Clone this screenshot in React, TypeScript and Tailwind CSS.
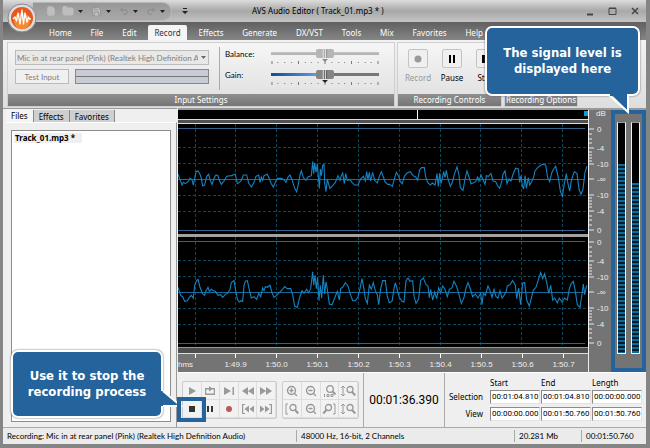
import React from "react";
import { File, Folder, Redo2, Save, Undo2, ZoomIn, ZoomOut } from "lucide-react";

const menu = ["Home", "File", "Edit", "Record", "Effects", "Generate", "DX/VST", "Tools", "Mix", "Favorites", "Help"];
const times = ["", "1:49.9", "1:50.0", "1:50.1", "1:50.2", "1:50.3", "1:50.4", "1:50.5", "1:50.6", "1:50.7"];
const gridX = [52, 172, 295, 418, 541, 664, 787, 908, 1030, 1153];

// x,offset from the zero line, three units to a pixel
const leftChannel =
  "0,-15 6,2 12,18 16,10 22,14 30,8 36,-2 42,2 46,18 50,-2 54,-22 60,-24 66,-14 70,-2 74,20 80,18 86,-8 92,-14 96,2 102,16 108,-2 114,-12 120,-10 124,4 130,16 138,6 146,-8 160,-10 172,-14 178,14 184,10 190,4 196,-12 206,-12 212,12 220,24 228,10 234,-8 242,-12 246,10 250,-6 254,4 258,-10 268,-14 274,0 280,14 286,24 292,10 298,-2 310,-2 318,2 324,10 330,-6 336,-12 342,2 350,28 356,38 362,10 366,-12 370,-24 376,-4 384,4 390,-6 400,-10 404,-52 407,-16 410,-48 414,-20 418,-46 421,-8 424,28 427,-30 430,-10 434,-40 438,-44 440,12 444,38 448,0 452,16 456,28 464,20 472,10 480,-10 486,4 490,-10 494,-18 499,14 503,-16 508,4 516,2 522,10 530,18 540,18 548,0 556,-8 562,6 566,-22 570,2 574,-20 578,6 584,-20 590,4 598,12 604,-8 610,-22 616,-6 621,8 629,16 635,16 643,22 649,0 655,-20 663,-6 667,8 673,14 679,-8 687,-18 697,-22 705,-10 713,-6 719,4 725,-28 731,-34 739,-34 743,-6 749,10 757,18 763,12 771,18 777,-16 781,22 785,-18 789,14 793,-2 797,-22 801,-4 805,-26 809,-4 817,22 823,10 829,-14 837,-36 843,-12 847,26 855,34 861,0 867,-24 873,-6 879,14 885,12 893,8 899,-6 903,6 909,-12 915,2 921,16 925,-10 931,-8 939,-16 945,6 953,8 959,20 965,28 971,8 975,-14 981,-24 987,14 993,0 999,6 1005,-14 1013,-32 1021,-30 1025,10 1029,-10 1033,20 1037,30 1041,-10 1045,28 1051,-4 1055,18 1061,8 1067,-6 1071,-24 1079,-34 1087,-40 1095,-44 1103,-42 1109,-4 1115,8 1121,-18 1127,-30 1133,-38 1141,-4 1147,36 1153,52 1159,14 1165,-16 1169,10 1175,36 1181,0 1189,-22 1197,-16 1203,30 1209,46 1215,30 1221,-20 1227,-38";
const rightChannel =
  "0,-14 4,-2 8,10 14,14 20,28 28,26 34,16 40,10 46,18 50,-20 56,-34 60,-38 66,-14 74,6 80,10 84,-4 90,-14 94,-2 100,-8 106,-4 112,-2 120,10 128,8 134,16 142,8 150,2 156,-8 160,-28 168,-34 172,-10 178,22 184,30 190,26 194,28 198,-18 202,-32 208,-34 214,-6 220,18 228,14 236,22 242,4 248,14 254,-12 258,-4 262,-16 268,-14 276,-20 282,2 288,16 296,10 304,2 312,-6 320,-16 328,-10 338,-10 344,8 350,42 358,46 364,20 372,-4 378,4 386,-8 392,2 398,-10 404,-60 407,-20 411,-50 415,-10 419,-44 423,26 427,-20 431,18 436,-50 440,6 444,-30 448,-8 454,36 462,38 470,18 478,-2 484,24 488,-10 494,-14 502,-28 510,-18 516,4 524,26 532,26 540,14 546,-10 552,-40 558,-8 562,20 568,34 574,-20 580,-8 586,-28 592,-4 598,8 602,38 608,-10 614,-34 622,-34 628,14 634,32 642,28 648,-10 652,-28 658,-6 664,16 672,28 678,30 684,-34 690,-42 696,-32 704,-34 708,12 714,34 722,20 728,-34 736,-42 744,-22 750,-18 754,18 758,-8 764,24 770,0 776,20 782,-12 788,2 794,-18 800,-10 808,14 814,-8 822,-12 828,-32 836,-16 842,4 850,34 858,16 864,-12 870,-28 878,-6 884,14 892,6 900,18 908,4 912,38 916,4 922,10 930,-18 936,-4 942,16 948,-8 954,14 960,18 966,-4 972,18 978,10 984,0 988,-18 996,-22 1004,-34 1012,-20 1016,20 1022,-12 1028,38 1034,-26 1040,-28 1046,24 1054,42 1060,18 1066,-6 1074,-14 1082,-40 1088,-58 1094,-40 1100,-54 1106,-28 1112,4 1118,-20 1124,24 1130,18 1138,32 1144,18 1152,30 1160,18 1168,24 1174,-10 1180,-26 1186,-32 1192,-2 1198,38 1206,46 1212,6 1216,-24 1220,8 1226,-20";

const shift = (data: string) =>
  data
    .split(" ")
    .map((p) => p.split(",").map(Number))
    .map(([x, y]) => `${x},${y + 164}`)
    .join(" ");

const Channel = ({ data }: { data: string }) => (
  <svg viewBox="0 0 1230 328" preserveAspectRatio="none" className="block h-full w-full" fill="none">
    <g stroke="#0b465c" strokeDasharray="3 2" shapeRendering="crispEdges">
      {gridX.map((x) => (
        <path key={x} d={`M${x} 0V328`} vectorEffect="non-scaling-stroke" />
      ))}
      {[71, 118, 212, 260].map((y) => (
        <path key={y} d={`M0 ${y}H1230`} vectorEffect="non-scaling-stroke" />
      ))}
    </g>
    <g stroke="#35608a" shapeRendering="crispEdges">
      <path d="M0 14H1222M0 317H1222" vectorEffect="non-scaling-stroke" />
      <path d="M0 164H1222" stroke="#176a98" vectorEffect="non-scaling-stroke" />
    </g>
    <polyline points={shift(data)} stroke="#1483c4" strokeWidth="1.1" vectorEffect="non-scaling-stroke" />
  </svg>
);

const scale = [
  [5, "0"],
  [24, "-4"],
  [40, "-10"],
  [55, "-∞"],
  [71, "-10"],
  [87, "-4"],
  [106, "0"],
] as const;

const DbScale = () => (
  <svg viewBox="0 0 22 110" preserveAspectRatio="xMinYMid meet" className="block h-full w-full">
    <path
      d="M0 5h5M0 24h5M0 40h5M0 55h5M0 71h5M0 87h5M0 106h5M0 10h3M0 15h3M0 19h3M0 28h3M0 31h3M0 34h3M0 37h3M0 74h3M0 77h3M0 80h3M0 83h3M0 92h3M0 96h3M0 101h3"
      stroke="#e8e8e8"
    />
    {scale.map(([y, label]) => (
      <text key={y} x="8" y={y + 3} fontSize="8" fill="#eeeeee">
        {label}
      </text>
    ))}
  </svg>
);

const Slider = ({ label, active }: { label: string; active?: boolean }) => (
  <div className="flex h-[21px] items-start">
    <label htmlFor={label} className="w-[46px] shrink-0">
      {label}:
    </label>
    <div className="h-[16px] flex-1">
      <input
        id={label}
        type="range"
        defaultValue={50}
        className={
          "block h-[11px] w-full appearance-none bg-[length:100%_3px] bg-center bg-no-repeat [&::-webkit-slider-thumb]:h-[9px] [&::-webkit-slider-thumb]:w-[18px] [&::-webkit-slider-thumb]:appearance-none [&::-webkit-slider-thumb]:rounded-[2px] " +
          (active
            ? "bg-[linear-gradient(90deg,#134a94,#5b9be0_42%,#777_50%,#777)] [&::-webkit-slider-thumb]:bg-[linear-gradient(90deg,#858585_35%,#eee_40%,#555_46%,#ddd_52%,#666_58%,#858585_65%)]"
            : "bg-[linear-gradient(#c4c4c4,#aeaeae)] [&::-webkit-slider-thumb]:bg-[linear-gradient(90deg,#b5b5b5_35%,#eee_40%,#999_46%,#eee_52%,#999_58%,#b5b5b5_65%)]")
        }
      />
      <svg viewBox="0 0 110 5" preserveAspectRatio="none" className="block h-[5px] w-full">
        <path
          d="M1 2v3M7 3v1M14 3v1M21 3v1M28 2v3M35 3v1M41 3v1M48 3v1M55 1v4M62 3v1M69 3v1M75 3v1M82 2v3M89 3v1M96 3v1M102 3v1M109 2v3"
          stroke="#777"
        />
        <path d="M52 0h6l-3 3z" fill={active ? "#222" : "#888"} />
      </svg>
    </div>
  </div>
);

const Group = ({ title, className, children }: { title: string; className: string; children?: React.ReactNode }) => (
  <section className={"flex flex-col border border-[#cfcfcf] bg-linear-to-b from-[#f6f6f6] to-[#dedede] " + className}>
    <div className="flex min-h-0 flex-1">{children}</div>
    <h2 className="h-[12px] shrink-0 bg-linear-to-b from-[#8f8f8f] to-[#757575] text-center leading-[11px] whitespace-nowrap text-white">
      {title}
    </h2>
  </section>
);

const RecordButton = ({ label, disabled, children }: { label: string; disabled?: boolean; children: React.ReactNode }) => (
  <button disabled={disabled} className="flex w-[34px] flex-col items-center gap-1 text-black disabled:text-[#999]">
    <span className="grid h-[19px] w-[20px] place-items-center rounded-[2px] border border-[#c4c4c4] bg-[#f0f0f0]">
      <svg viewBox="0 0 10 10" className="size-[10px]" fill="currentColor">
        {children}
      </svg>
    </span>
    <span className="leading-[12px]">{label}</span>
  </button>
);

const Caret = () => (
  <svg viewBox="0 0 5 3" className="h-[3px] w-[5px] shrink-0" fill="#222">
    <path d="M0 0h5L2.500 3z" />
  </svg>
);

const Shape = ({ d, red, dark }: { d: string; red?: boolean; dark?: boolean }) => (
  <svg
    viewBox="0 0 14 12"
    className={"h-[12px] w-[14px] shrink-0 " + (red ? "text-[#b85a5a]" : dark ? "text-[#333]" : "text-[#999]")}
    fill="currentColor"
  >
    <path d={d} fillRule="evenodd" />
  </svg>
);

const transport = [
  { name: "Play", icon: <Shape d="M4 2l7 4-7 4z" /> },
  { name: "Loop", icon: <Shape d="M2 3h4V1l3 2h3v7H2zM3.200 4.500v4h7.600v-4H9L6 6.500v-2z" /> },
  { name: "Play to end", icon: <Shape d="M2 2l7 4-7 4zM10.500 2H12v8h-1.500z" /> },
  { name: "Rewind", icon: <Shape d="M7 2v8L1 6zM13 2v8L7 6z" /> },
  { name: "Forward", icon: <Shape d="M1 2l6 4-6 4zM7 2l6 4-6 4z" /> },
  { name: "Stop", icon: <Shape dark d="M4 3h6v6H4z" /> },
  { name: "Pause", icon: <Shape dark d="M4 3h2v6H4zM8 3h2v6H8z" /> },
  { name: "Record", icon: <Shape red d="M4 6a3 3 0 1 0 6 0a3 3 0 1 0-6 0z" /> },
  { name: "To start", icon: <Shape d="M1 1h3v1H2.200v8H4v1H1zM8 2.500v7L3.500 6zM13 2.500v7L8.500 6z" /> },
  { name: "To end", icon: <Shape d="M13 1h-3v1h1.800v8H10v1h3zM1 2.500v7L5.500 6zM6 2.500v7L10.500 6z" /> },
];

const glass = "size-[12px] shrink-0";

const VerticalZoom = () => (
  <svg viewBox="0 0 16 12" className="h-[12px] w-[16px] shrink-0" fill="none" stroke="currentColor">
    <path d="M3 1v10M1 3l2-2 2 2M1 9l2 2 2-2" />
    <circle cx="10" cy="4.500" r="3" strokeWidth="1.300" />
    <path d="M12.200 7l3 3.500" strokeWidth="2" />
  </svg>
);

const zooms = [
  { name: "Zoom in", icon: <ZoomIn className={glass} strokeWidth={2.8} /> },
  { name: "Zoom out", icon: <ZoomOut className={glass} strokeWidth={2.8} /> },
  {
    name: "Zoom full",
    icon: (
      <svg viewBox="0 0 14 14" className="size-[14px]" fill="none" stroke="currentColor">
        <circle cx="8" cy="5" r="3.300" strokeWidth="1.300" />
        <path d="M10.500 7.500l3 3" strokeWidth="2" />
        <path d="M2.500 10v3M5 10.500h2v2H5zM9 10.500h2v2H9z" />
      </svg>
    ),
  },
  { name: "Zoom in vertically", icon: <VerticalZoom /> },
  {
    name: "Zoom to left",
    icon: (
      <svg viewBox="0 0 16 12" className="h-[12px] w-[16px]" fill="none" stroke="currentColor">
        <path d="M4 1H2v10h2" />
        <circle cx="9" cy="4.500" r="3" strokeWidth="1.300" />
        <path d="M11.200 7l3 3.500" strokeWidth="2" />
      </svg>
    ),
  },
  { name: "Zoom to selection", icon: <ZoomOut className={glass} strokeWidth={2.8} /> },
  {
    name: "Zoom to right",
    icon: (
      <svg viewBox="0 0 16 12" className="h-[12px] w-[16px]" fill="none" stroke="currentColor">
        <path d="M12 1h2v10h-2" />
        <circle cx="7.500" cy="4.500" r="3" strokeWidth="1.300" />
        <path d="M5.300 7l-3 3.500" strokeWidth="2" />
      </svg>
    ),
  },
  { name: "Zoom out vertically", icon: <VerticalZoom /> },
];

const Field = ({ name, value }: { name: string; value: string }) => (
  <input
    aria-label={name}
    defaultValue={value}
    className="block h-[14px] w-full min-w-0 border border-[#e2e2e2] border-t-[#8a8a8a] border-l-[#8a8a8a] bg-white pl-px font-['Roboto',sans-serif] outline-none"
  />
);

const Meter = ({ level }: { level: number }) => (
  <div className="flex w-[9px] flex-col justify-end border border-[#f4f4f4] border-t-[#999] bg-black">
    <div
      className="bg-[repeating-linear-gradient(#0b6a9c_0_2px,#031a27_2px_4px)]"
      style={{ height: `${level}%` }}
    />
  </div>
);

const App = () => {
  return (
    <div className="relative flex h-screen w-full flex-col overflow-hidden border-r-4 border-b-4 border-l-[3px] border-[#858585] bg-[#efefef] font-['Noto_Sans',sans-serif] text-[8px] leading-[12px] text-black">
      <header className="relative shrink-0">
        <div className="flex h-[22px] items-center bg-linear-to-b from-[#dcdcdc] via-[#a8a8a8] to-[#c4c4c4]">
          <div className="ml-[30px] flex h-[19px] w-[139px] items-center rounded-r-full border border-l-0 border-[#b8b8b8] bg-linear-to-b from-[#979797] to-[#a9a9a9] pl-[13px] text-[#bebebe]">
            <File className="size-[10px]" fill="currentColor" />
            <Folder className="ml-[6px] size-[12px]" fill="currentColor" />
            <span className="ml-1">
              <Caret />
            </span>
            <Save className="ml-2 size-[11px]" fill="currentColor" stroke="#909090" />
            <span className="ml-1">
              <Caret />
            </span>
            <Undo2 className="ml-2 size-[10px] text-[#858585]" />
            <span className="ml-1">
              <Caret />
            </span>
            <Redo2 className="ml-2 size-[10px] text-[#858585]" />
            <span className="ml-1">
              <Caret />
            </span>
          </div>
          <svg viewBox="0 0 6 6" className="ml-[10px] size-[6px]" fill="#222">
            <path d="M1 0h4v1H1zM0 3h6L3 6z" />
          </svg>
          <h1 className="ml-[64px] flex-1 whitespace-nowrap">AVS Audio Editor ( Track_01.mp3 * )</h1>
          <svg viewBox="0 0 54 10" className="mr-[6px] h-[10px] w-[54px]" fill="none" stroke="#444">
            <path d="M1 8.500h6" strokeWidth="2" />
            <path d="M23 2.500h7v6h-7zM23 2h7" />
            <path d="M46 2l6 6M52 2l-6 6" strokeWidth="1.500" />
          </svg>
        </div>
        <nav className="h-[18px] bg-linear-to-b from-[#606060] to-[#858585] pt-[3px] pl-[37px] text-white">
          <div className="flex w-[452px] justify-between">
            {menu.map((item) => (
              <button
                key={item}
                className={
                  item === "Record"
                    ? "mx-[2px] h-[15px] rounded-t-[2px] bg-[#f5f5f5] px-[6px] text-[#333]"
                    : "h-[15px] px-[9px] whitespace-nowrap"
                }
              >
                {item}
              </button>
            ))}
          </div>
        </nav>
        <svg viewBox="0 0 30 30" className="absolute top-[3px] left-[4px] size-[30px]">
          <circle cx="15" cy="15" r="14" fill="#ddd" stroke="#888" />
          <circle cx="15" cy="15" r="11" fill="#e8571d" />
          <circle cx="15" cy="18" r="8" fill="#f58a32" />
          <path
            d="M6 16l2-2 1.500 4 1.500-8 2 11 2-14 1.500 14L18 10l2 9 1.500-5 1 2H24"
            fill="none"
            stroke="#fff"
            strokeWidth="1.300"
            strokeLinejoin="round"
          />
        </svg>
      </header>

      <div className="flex h-[68px] shrink-0 gap-[2px] bg-linear-to-b from-[#f2f2f2] to-[#dedede] pt-[2px] pb-px pl-1">
        <Group title="Input Settings" className="w-[388px]">
          <div className="flex w-[211px] flex-col gap-1 pt-[7px] pl-[7px] font-['Lato',sans-serif] text-[#808080]">
            <div className="relative w-[194px]">
              <select
                aria-label="Input device"
                className="block h-[15px] w-full appearance-none border border-[#bbb] bg-[#e8e8e8] pr-[10px] pl-px"
              >
                <option>Mic in at rear panel (Pink) (Realtek High Definition Audio)</option>
              </select>
              <svg viewBox="0 0 5 3" className="absolute top-[6px] right-[3px] h-[3px] w-[5px]" fill="#666">
                <path d="M0 0h5L2.500 3z" />
              </svg>
            </div>
            <div className="flex gap-[6px]">
              <button className="h-[15px] w-[54px] border border-[#bbb] bg-[#f0f0f0]">Test Input</button>
              <div className="flex h-[15px] w-[134px] flex-col border border-[#888] bg-[#c8ccd6]">
                <div className="h-[7px] border-b border-[#777]" />
              </div>
            </div>
          </div>
          <div className="my-1 flex-1 border-l border-[#aaa] pt-px pr-[15px] pl-[5px] font-['Lato',sans-serif]">
            <Slider label="Balance" />
            <Slider label="Gain" active />
          </div>
        </Group>
        <Group title="Recording Controls" className="w-[105px]">
          <div className="flex pt-[6px] pl-[3px]">
            <RecordButton label="Record" disabled>
              <circle cx="5" cy="5" r="3.500" />
            </RecordButton>
            <RecordButton label="Pause">
              <path d="M2 1h2v8H2zM6 1h2v8H6z" />
            </RecordButton>
            <RecordButton label="Stop">
              <path d="M1 1h8v8H1z" />
            </RecordButton>
          </div>
        </Group>
        <Group title="Recording Options" className="w-[74px]" />
      </div>

      <div className="flex min-h-0 flex-1">
        <aside className="flex w-[174px] shrink-0 flex-col border-t border-[#999] pl-[3px]">
          <div className="flex items-end text-black">
            <button className="h-[13px] bg-[#f4f4f4] px-[5px]">Files</button>
            <button className="h-[12px] border-x border-[#888] bg-[#cfcfcf] px-[5px] leading-[11px]">Effects</button>
            <button className="h-[12px] border-r border-[#888] bg-[#cfcfcf] px-[5px] leading-[11px]">Favorites</button>
          </div>
          <div className="flex flex-1 border-t border-r border-white border-r-[#999] p-[5px] pt-[7px]">
            <ul className="flex-1 border border-[#8d8d8d] bg-white p-[2px]">
              <li className="w-[68px] bg-[#efefef] pl-px leading-[10px] font-bold">Track_01.mp3 *</li>
            </ul>
          </div>
        </aside>

        <main className="flex min-w-0 flex-1 flex-col pl-px">
          <div className="flex min-h-0 flex-1 border-t-2 border-[#999] bg-[#747474] font-['Liberation_Sans',sans-serif]">
            <div className="flex min-w-0 flex-1 flex-col">
              <div className="flex h-[9px] shrink-0 justify-end bg-black">
                <div className="mr-[166px] w-px bg-white" />
                <div className="mt-px h-[5px] w-[4px] bg-[#0a9be6]" />
              </div>
              <div className="h-[5px] shrink-0 border-y border-[#ddd] bg-[#505050]" />
              <div className="min-h-0 flex-1 bg-black">
                <Channel data={leftChannel} />
              </div>
              <div className="h-[3px] shrink-0 bg-[#a2a29e]" />
              <div className="min-h-0 flex-1 bg-black">
                <Channel data={rightChannel} />
              </div>
              <div className="h-[7px] shrink-0 border-y border-t-[#999] border-b-[#ddd] bg-[#4d4f4d]" />
              <div className="flex h-[18px] shrink-0 pr-1 text-[#eee]">
                {times.map((t, i) => (
                  <div key={i} className={i ? "flex flex-1 flex-col items-center" : "flex w-[37px] flex-col items-start"}>
                    <div className={i ? "h-1 w-px bg-white" : "ml-[17px] h-1 w-px bg-white"} />
                    <div className="leading-[14px]">{i ? t : "hms"}</div>
                  </div>
                ))}
              </div>
            </div>
            <div className="flex w-[23px] shrink-0 flex-col border-l border-[#eee] text-[#eee]">
              <div className="h-[14px] shrink-0 pl-[7px] leading-[8px]">dB</div>
              <div className="min-h-0 flex-1">
                <DbScale />
              </div>
              <div className="h-[3px] shrink-0" />
              <div className="min-h-0 flex-1">
                <DbScale />
              </div>
              <div className="h-[25px] shrink-0" />
            </div>
            <div className="flex w-[35px] shrink-0 gap-[5px] border-4 border-[#24639c] px-[2px] pt-[8px] pb-[14px]">
              <Meter level={82} />
              <Meter level={74} />
            </div>
          </div>

          <div className="flex h-[55px] shrink-0 items-stretch border-t border-white">
            <div className="flex gap-[5px] py-2 pl-1">
              <div className="grid w-[95px] grid-cols-5 grid-rows-2 rounded-[2px] border border-[#ccc] bg-[#f2f2f2]">
                {transport.map(({ name, icon }) => (
                  <button
                    key={name}
                    aria-label={name}
                    className="relative grid place-items-center border-r border-b border-[#ddd]"
                  >
                    {icon}
                    {name === "Stop" && (
                      <span className="absolute -top-[3px] -left-[6px] z-10 h-[25px] w-[29px] border-4 border-[#24639c]" />
                    )}
                  </button>
                ))}
              </div>
              <div className="grid w-[77px] grid-cols-4 grid-rows-2 rounded-[2px] border border-[#ccc] bg-[#f2f2f2] text-[#999]">
                {zooms.map(({ name, icon }) => (
                  <button
                    key={name}
                    aria-label={name}
                    className="flex items-center justify-center border-r border-b border-[#ddd]"
                  >
                    {icon}
                  </button>
                ))}
              </div>
            </div>
            <div className="ml-1 flex w-[82px] items-center justify-center border-x border-[#aaa] font-['Roboto',sans-serif] text-[12px]">
              00:01:36.390
            </div>
            <table className="mt-[4px] mr-[3px] ml-auto h-[45px] w-[195px] table-fixed">
              <thead>
                <tr className="h-[11px] text-left leading-[11px]">
                  <td className="w-[42px]" />
                  <th className="font-normal">Start</th>
                  <th className="font-normal">End</th>
                  <th className="font-normal">Length</th>
                </tr>
              </thead>
              <tbody>
                {[
                  ["Selection", "00:01:04.810", "00:01:04.810", "00:00:00.000"],
                  ["View", "00:00:00.000", "00:01:50.760", "00:01:50.760"],
                ].map(([name, ...values]) => (
                  <tr key={name}>
                    <th className="pr-[7px] text-right font-normal">{name}</th>
                    {values.map((v, i) => (
                      <td key={i} className="pr-px">
                        <Field name={`${name} ${["start", "end", "length"][i]}`} value={v} />
                      </td>
                    ))}
                  </tr>
                ))}
              </tbody>
            </table>
          </div>
        </main>
      </div>

      <footer className="flex h-[17px] shrink-0 items-center border-t border-[#aaa] bg-[#ebebeb] font-['Lato',sans-serif] whitespace-nowrap">
        <div className="w-[294px] border-r border-[#aaa] pl-1">
          Recording: Mic in at rear panel (Pink) (Realtek High Definition Audio)
        </div>
        <div className="flex-1 pl-1">48000 Hz, 16-bit, 2 Channels</div>
        <div className="w-[67px] border-l border-[#aaa] pl-1">20.281 Mb</div>
        <div className="w-[65px] border-l border-[#aaa] pl-1">00:01:50.760</div>
      </footer>

      <div className="absolute top-[26px] right-[6px] flex h-[70px] w-[155px] items-center justify-center rounded-[7px] border-2 border-white bg-[#24639c] text-center font-['DejaVu_Sans_Condensed','DejaVu_Sans',sans-serif] text-[13px] leading-[16px] font-bold text-white shadow-[0_0_2px_#555]">
        The signal level is
        <br />
        displayed here
        <svg viewBox="0 0 22 22" className="absolute right-[8px] -bottom-[20px] size-[22px]">
          <path d="M2 1L19 18V1z" fill="#24639c" />
          <path d="M1 3L20 20V3" fill="none" stroke="#fff" strokeWidth="2" />
          <path d="M2 0h17v4H2z" fill="#24639c" />
        </svg>
      </div>

      <div className="absolute bottom-[26px] left-2 flex h-[68px] w-[152px] items-center justify-center rounded-[7px] border-2 border-white bg-[#24639c] text-center font-['DejaVu_Sans_Condensed','DejaVu_Sans',sans-serif] text-[13px] leading-[16px] font-bold text-white shadow-[0_0_2px_#555]">
        Use it to stop the
        <br />
        recording process
        <svg viewBox="0 0 22 18" className="absolute top-[38px] -right-[22px] h-[18px] w-[22px]">
          <path d="M0 1h2L20 16H0z" fill="#24639c" />
          <path d="M2 1L20 16H2" fill="none" stroke="#fff" strokeWidth="2" />
        </svg>
      </div>
    </div>
  );
};

export default App;
